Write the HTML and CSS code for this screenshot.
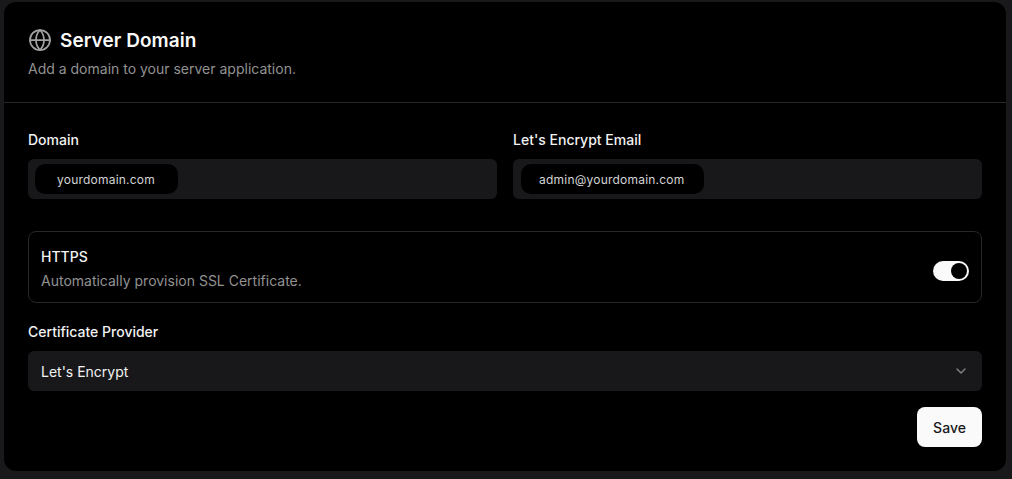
FILE: index.html
```html
<!DOCTYPE html>
<html lang="en">
<head>
<meta charset="utf-8">
<title>Server Domain</title>
<link rel="stylesheet" href="styles.css">
</head>
<body>
<main class="card">
  <header class="card-header">
    <h1 class="title">
      <svg class="globe" viewBox="0 0 24 24" fill="none" stroke="currentColor" stroke-width="2" stroke-linecap="round" stroke-linejoin="round" aria-hidden="true"><circle cx="12" cy="12" r="10"/><path d="M12 2a14.5 14.5 0 0 0 0 20 14.5 14.5 0 0 0 0-20"/><path d="M2 12h20"/></svg>
      <span class="title-text">Server Domain</span>
    </h1>
    <p class="subtitle">Add a domain to your server application.</p>
  </header>
  <form class="card-body">
    <div class="two-col">
      <div class="field">
        <label class="label">Domain</label>
        <div class="input"><span class="pill pill-domain">yourdomain.com</span></div>
      </div>
      <div class="field">
        <label class="label">Let's Encrypt Email</label>
        <div class="input input-email"><span class="pill pill-email">admin@yourdomain.com</span></div>
      </div>
    </div>
    <div class="switch-row">
      <div class="switch-text">
        <div class="switch-title">HTTPS</div>
        <div class="switch-desc">Automatically provision SSL Certificate.</div>
      </div>
      <div class="switch"><span class="thumb"></span></div>
    </div>
    <div class="field field-cert">
      <label class="label">Certificate Provider</label>
      <div class="select">
        <span>Let's Encrypt</span>
        <svg class="chevron" viewBox="0 0 24 24" fill="none" stroke="currentColor" stroke-width="2" stroke-linecap="round" stroke-linejoin="round" aria-hidden="true"><path d="m6 9 6 6 6-6"/></svg>
      </div>
    </div>
    <div class="actions"><button class="save" type="button">Save</button></div>
  </form>
</main>
</body>
</html>
```
FILE: styles.css
```css
* { box-sizing: border-box; }
html, body { height: 100%; }
body {
  margin: 0;
  background: #19191b;
  font-family: Inter, "Liberation Sans", sans-serif;
  color: #fafafa;
  padding: 2px 6px 8px 4px;
}
.card {
  height: 469px;
  background: #000;
  border-radius: 12px;
  overflow: hidden;
}
.card-header {
  height: 101px;
  padding: 24px 24px 0;
  border-bottom: 1px solid #27272a;
}
.title {
  margin: 0;
  display: flex;
  align-items: center;
  gap: 8px;
  height: 28px;
  font-size: 19px;
  line-height: 28px;
  font-weight: 600;
  letter-spacing: .05px;
}
.title-text { padding-top: 1px; }
.globe { width: 24px; height: 24px; color: #a1a1a1; stroke-width: 1.75; }
.subtitle {
  margin: 5px 0 0;
  font-size: 14px;
  line-height: 20px;
  color: #929292;
}
.card-body { padding: 25px 24px 0; }
.two-col { display: grid; grid-template-columns: 1fr 1fr; gap: 16px; }
.field { display: flex; flex-direction: column; gap: 7px; }
.label { font-size: 14px; line-height: 24px; font-weight: 450; height: 24px; color: #f2f2f2; }
.input {
  height: 40px;
  background: #18181b;
  border-radius: 6px;
  padding: 5px 7px;
}
.input-email { padding-left: 8px; }
.pill {
  display: inline-flex;
  align-items: center;
  height: 30px;
  background: #000;
  border-radius: 10px;
  font-size: 12px;
  letter-spacing: .22px;
  color: #d4d4d4;
  padding-left: 22px;
}
.pill-domain { width: 143px; }
.pill-email { width: 183px; padding-left: 18px; }
.switch-row {
  margin-top: 32px;
  height: 72px;
  border: 1px solid #27272a;
  border-radius: 8px;
  padding: 0 12px;
  display: flex;
  align-items: center;
  justify-content: space-between;
}
.switch-text { padding-top: 4px; }
.switch-title { font-size: 14px; line-height: 20px; font-weight: 450; color: #f2f2f2; }
.switch-desc { font-size: 14px; line-height: 20px; color: #929292; margin-top: 4px; }
.switch {
  width: 36px;
  height: 20px;
  border-radius: 10px;
  background: #fafafa;
  padding: 2px;
  display: flex;
  justify-content: flex-end;
  margin-top: 8px;
}
.thumb { width: 16px; height: 16px; border-radius: 50%; background: #000; }
.field-cert { margin-top: 17px; }
.select {
  height: 40px;
  background: #18181b;
  border-radius: 6px;
  padding: 0 13px;
  display: flex;
  align-items: center;
  justify-content: space-between;
  font-size: 14px;
  color: #f2f2f2;
}
.chevron { width: 16px; height: 16px; color: #a1a1a1; opacity: .8; }
.actions { display: flex; justify-content: flex-end; margin-top: 16px; }
.save {
  width: 65px;
  height: 40px;
  border: 0;
  border-radius: 8px;
  background: #fafafa;
  color: #18181b;
  font: 500 14px Inter, "Liberation Sans", sans-serif;
}
```
